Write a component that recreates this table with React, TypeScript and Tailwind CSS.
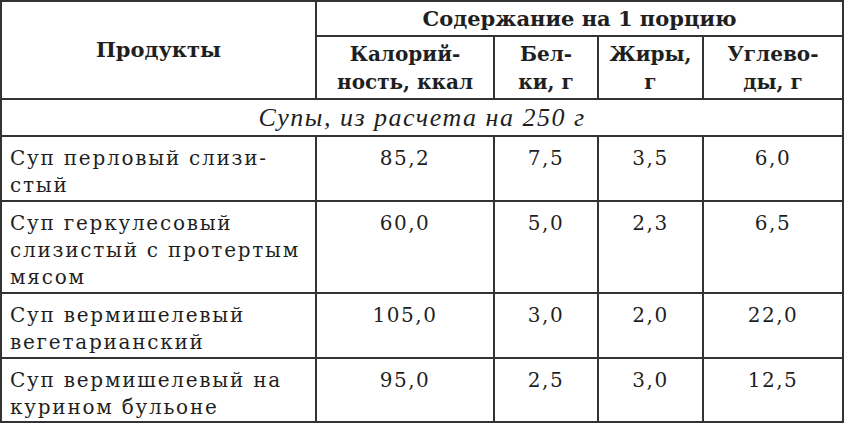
const rows = [
  { name: ["Суп перловый слизи-", "стый"], kcal: "85,2", prot: "7,5", fat: "3,5", carb: "6,0", h: "h-[65px]" },
  { name: ["Суп геркулесовый", "слизистый с протертым", "мясом"], kcal: "60,0", prot: "5,0", fat: "2,3", carb: "6,5", h: "h-[92px]" },
  { name: ["Суп вермишелевый", "вегетарианский"], kcal: "105,0", prot: "3,0", fat: "2,0", carb: "22,0", h: "h-[65px]" },
  { name: ["Суп вермишелевый на", "курином бульоне"], kcal: "95,0", prot: "2,5", fat: "3,0", carb: "12,5", h: "h-[64px]" },
];

const cell = "border-2 border-[#333]";

export default function App() {
  return (
    <div className="w-[844px] h-[424px] bg-white text-[#1f1f1f] font-['DejaVu_Serif',serif] overflow-hidden">
      <table className="table-fixed border-collapse w-[842px]">
        <colgroup>
          <col className="w-[315px]" />
          <col className="w-[178px]" />
          <col className="w-[104px]" />
          <col className="w-[105px]" />
          <col className="w-[140px]" />
        </colgroup>
        <thead>
          <tr className="h-[35px]">
            <th rowSpan={2} className={`${cell} text-[21px] font-bold text-center align-middle`}>
              Продукты
            </th>
            <th colSpan={4} className={`${cell} text-[21px] font-bold leading-[24px] text-center align-middle`}>
              Содержание на 1 порцию
            </th>
          </tr>
          <tr className="h-[63px]">
            {[
              ["Калорий-", "ность, ккал"],
              ["Бел-", "ки, г"],
              ["Жиры,", "г"],
              ["Углево-", "ды, г"],
            ].map((l, i) => (
              <th key={i} className={`${cell} text-[20px] font-bold leading-[28px] text-center align-middle whitespace-nowrap`}>
                {l[0]}
                <br />
                {l[1]}
              </th>
            ))}
          </tr>
        </thead>
        <tbody>
          <tr className="h-[37px]">
            <td colSpan={5} className={`${cell} text-center italic text-[26px] tracking-[1.5px] leading-[30px] font-['Liberation_Serif',serif]`}>
              Супы, из расчета на 250 г
            </td>
          </tr>
          {rows.map((r, i) => (
            <tr key={i} className={r.h}>
              <td className={`${cell} align-top pl-[8px] pt-[8px] text-[20px] leading-[27px] tracking-[1.75px] whitespace-nowrap`}>
                {r.name.map((n, j) => (
                  <div key={j}>{n}</div>
                ))}
              </td>
              {[r.kcal, r.prot, r.fat, r.carb].map((v, j) => (
                <td key={j} className={`${cell} align-top text-center pt-[8px] text-[20px] leading-[27px] tracking-[1.5px]`}>
                  {v}
                </td>
              ))}
            </tr>
          ))}
        </tbody>
      </table>
    </div>
  );
}
